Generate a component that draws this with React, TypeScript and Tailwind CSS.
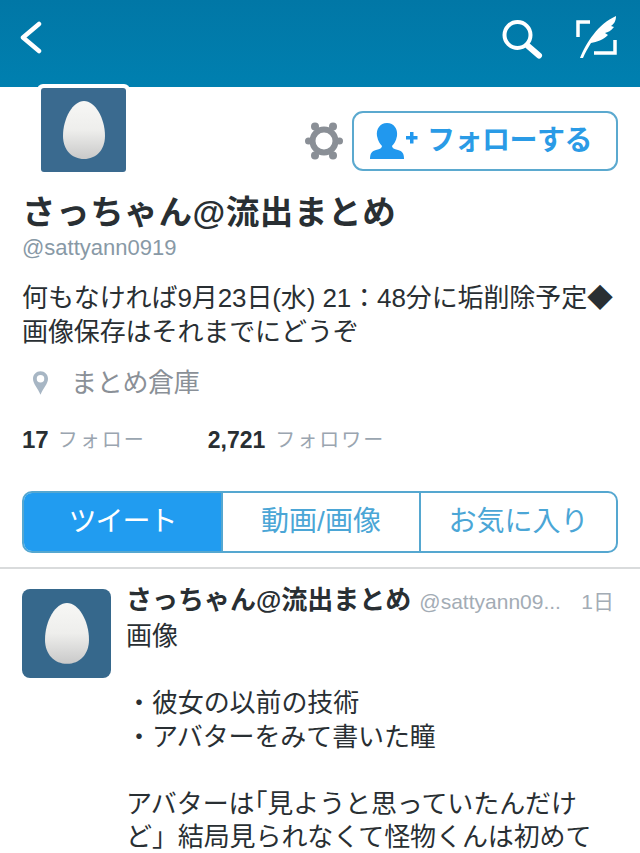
const jp = "font-['Liberation_Sans','Noto_Sans_CJK_JP',sans-serif]";

function Egg({ width }: { width: number }) {
  return (
    <svg width={width} height={width * 1.38} viewBox="0 0 42 58">
      <defs>
        <linearGradient id="eggShade" x1="0" y1="0" x2="0" y2="1">
          <stop offset="0" stopColor="#f7f7f5" />
          <stop offset="0.5" stopColor="#eeeeec" />
          <stop offset="1" stopColor="#c9c9c9" />
        </linearGradient>
      </defs>
      <path d="M21 0C32 0 42 17 42 35C42 49 33 58 21 58C9 58 0 49 0 35C0 17 10 0 21 0Z" fill="url(#eggShade)" />
    </svg>
  );
}

function Gear() {
  return (
    <svg width="38" height="38" viewBox="0 0 38 38" fill="#8a8f96">
      <circle cx="19" cy="19" r="11.500" fill="none" stroke="#8a8f96" strokeWidth="6" />
      <circle cx="10" cy="4.500" r="4" />
      <circle cx="28" cy="4.500" r="4" />
      <circle cx="3.500" cy="19" r="3.500" />
      <circle cx="34.500" cy="19" r="3.500" />
      <circle cx="10" cy="33.500" r="4" />
      <circle cx="28" cy="33.500" r="4" />
    </svg>
  );
}

function App() {
  return (
    <div className={`w-[640px] h-[853px] overflow-hidden bg-white ${jp}`}>
      {/* Header */}
      <header className="h-[87px] flex items-center justify-between pl-[20px] pr-[23px] pb-[13px] bg-gradient-to-b from-[#0177a6] to-[#0080b0]">
        <svg width="22" height="33" viewBox="0 0 22 33" fill="none" stroke="#fff" strokeWidth="4.500" strokeLinecap="round" strokeLinejoin="round">
          <path d="M19 3L3 16.500L19 30" />
        </svg>
        <div className="flex items-center gap-[33px]">
          <svg className="mt-[4px]" width="41" height="39" viewBox="0 0 41 39" fill="none" stroke="#fff" strokeLinecap="round">
            <circle cx="15.500" cy="15" r="13" strokeWidth="4" />
            <path d="M26 26L37 35.500" strokeWidth="6" />
          </svg>
          <svg width="41" height="42" viewBox="0 0 41 42" fill="none">
            <path d="M14 6H2V21" stroke="#fff" strokeWidth="3.500" />
            <path d="M39 24V37H18" stroke="#fff" strokeWidth="3.500" />
            <path d="M4 42C10 27 22 8 40 0C40 5 38 8 35 10L38 11C35 15 32 16 29 17L32 19C27 24 21 26 15 27C12 32 9 37 7 42Z" fill="#fff" />
          </svg>
        </div>
      </header>

      {/* Profile */}
      <section className="px-[22px]">
        <div className="flex items-start justify-between">
          <div className="ml-[15px] -mt-[3px] p-[4px] bg-white rounded-[6px]">
            <div className="w-[85px] h-[84px] rounded-[3px] bg-[#3a6a8f] flex items-center justify-center">
              <Egg width={42} />
            </div>
          </div>
          <div className="flex items-center gap-[9px] mt-[24px]">
            <Gear />
            <div className="w-[266px] h-[60px] rounded-[11px] border-2 border-[#5ba9cf] flex items-center pl-[16px] text-[#2198e8]">
              <svg width="48" height="36" viewBox="0 0 48 36" fill="#2198ee">
                <path d="M17 0C24 0 28 6 27 13C26 18 24 21 22 23C22 25 24 26 28 27C32 28 34 30 34 36H0C0 30 2 28 6 27C10 26 12 25 12 23C10 21 8 18 7 13C6 6 10 0 17 0Z" />
                <path d="M36 13H40V9H43.500V13H47.500V16.500H43.500V20.500H40V16.500H36Z" />
              </svg>
              <span className="ml-[9px] text-[28px] leading-none font-bold tracking-[-0.5px] text-[#2a9be6]">フォローする</span>
            </div>
          </div>
        </div>

        <h1 className="mt-[15px] text-[33.500px] leading-[44px] font-bold text-[#292f33] tracking-[0.6px] whitespace-nowrap">さっちゃん@流出まとめ</h1>
        <p className="mt-[1px] text-[22px] leading-[24px] text-[#8899a6]">@sattyann0919</p>
        <p className="mt-[21px] text-[26px] leading-[34px] text-[#292f33] tracking-[-0.1px] whitespace-nowrap">
          何もなければ9月23日(水) 21：48分に垢削除予定◆
          <br />
          画像保存はそれまでにどうぞ
        </p>
        <div className="mt-[17px] flex items-center h-[34px] text-[#8a9097]">
          <svg className="ml-[11px]" width="15" height="24" viewBox="0 0 18 28">
            <path fillRule="evenodd" d="M9 0C14 0 18 4 18 9C18 15 12 21 9 28C6 21 0 15 0 9C0 4 4 0 9 0ZM9 4.500A4.500 4.500 0 1 0 9 13.500A4.500 4.500 0 1 0 9 4.500Z" fill="#a7b6c4" />
          </svg>
          <span className="ml-[23px] text-[26px] leading-none tracking-[-0.3px]">まとめ倉庫</span>
        </div>
        <div className="mt-[26px] flex items-center h-[28px]">
          <span className="text-[24px] font-bold text-[#292f33]">17</span>
          <span className="ml-[9px] text-[20px] tracking-[2px] text-[#9aa5b0]">フォロー</span>
          <span className="ml-[62px] text-[23px] font-bold text-[#292f33]">2,721</span>
          <span className="ml-[10px] text-[20px] tracking-[2px] text-[#9aa5b0]">フォロワー</span>
        </div>

        {/* Tabs */}
        <div className="mt-[37px] h-[62px] flex rounded-[10px] border-2 border-[#55a7d0] overflow-hidden text-[28px]">
          <div className="w-[197px] flex items-center justify-center bg-[#219cf0] text-white tracking-[-1px]">ツイート</div>
          <div className="w-[198px] flex items-center justify-center border-l-2 border-[#55a7d0] text-[#4ba6d6]">動画/画像</div>
          <div className="flex-1 flex items-center justify-center border-l-2 border-[#55a7d0] text-[#4ba6d6]">お気に入り</div>
        </div>
      </section>

      <div className="mt-[14px] h-[2px] bg-[#d9dbdc]" />

      {/* Tweet */}
      <article className="flex pl-[22px] pt-[20px] pr-[26px]">
        <div className="w-[89px] h-[89px] shrink-0 rounded-[8px] bg-[#36688c] flex items-center justify-center">
          <Egg width={44} />
        </div>
        <div className="ml-[15px] flex-1 min-w-0">
          <div className="flex items-baseline h-[28px] -mt-[3px] whitespace-nowrap">
            <span className="text-[26px] leading-[28px] font-bold text-[#292f33]">さっちゃん@流出まとめ</span>
            <span className="ml-[8px] text-[21px] leading-[28px] text-[#a3acb5]">@sattyann09...</span>
            <span className="ml-auto text-[21px] leading-[28px] text-[#a3acb5]">1日</span>
          </div>
          <div className="mt-[6px] text-[26px] leading-[33.500px] text-[#292f33] whitespace-nowrap tracking-[-0.1px]">
            <p>画像</p>
            <p>&nbsp;</p>
            <p>・彼女の以前の技術</p>
            <p>・アバターをみて書いた瞳</p>
            <p>&nbsp;</p>
            <p>アバターは｢見ようと思っていたんだけ</p>
            <p>ど」結局見られなくて怪物くんは初めて</p>
          </div>
        </div>
      </article>
    </div>
  );
}

export default App;
